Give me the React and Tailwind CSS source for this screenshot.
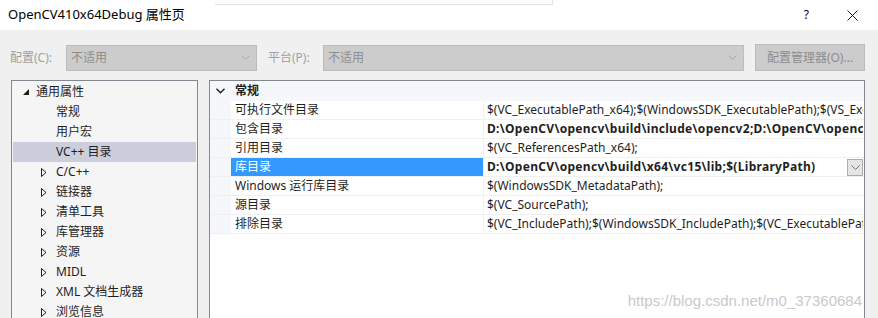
import React from 'react';

const FONT = { fontFamily: '"Noto Sans", "Noto Sans CJK SC", sans-serif' };

const TREE_ITEMS = [
  { label: '常规', depth: 1 },
  { label: '用户宏', depth: 1 },
  { label: 'VC++ 目录', depth: 1, selected: true },
  { label: 'C/C++', depth: 1, collapsed: true },
  { label: '链接器', depth: 1, collapsed: true },
  { label: '清单工具', depth: 1, collapsed: true },
  { label: '库管理器', depth: 1, collapsed: true },
  { label: '资源', depth: 1, collapsed: true },
  { label: 'MIDL', depth: 1, collapsed: true },
  { label: 'XML 文档生成器', depth: 1, collapsed: true },
  { label: '浏览信息', depth: 1, collapsed: true },
];

const PROPERTY_ROWS = [
  { name: '可执行文件目录', value: '$(VC_ExecutablePath_x64);$(WindowsSDK_ExecutablePath);$(VS_ExecutablePath);$(MSBuild_ExecutablePath)' },
  { name: '包含目录', value: 'D:\\OpenCV\\opencv\\build\\include\\opencv2;D:\\OpenCV\\opencv\\build\\include;$(IncludePath)', bold: true },
  { name: '引用目录', value: '$(VC_ReferencesPath_x64);' },
  { name: '库目录', value: 'D:\\OpenCV\\opencv\\build\\x64\\vc15\\lib;$(LibraryPath)', bold: true, selected: true },
  { name: 'Windows 运行库目录', value: '$(WindowsSDK_MetadataPath);' },
  { name: '源目录', value: '$(VC_SourcePath);' },
  { name: '排除目录', value: '$(VC_IncludePath);$(WindowsSDK_IncludePath);$(VC_ExecutablePath_x64);' },
];

const Chevron = ({ className = 'text-[#a6a6a6]' }) => (
  <svg width="9" height="5" viewBox="0 0 9 5" className={className}>
    <path d="M0.5 0.5 L4.5 4.5 L8.5 0.5" fill="none" stroke="currentColor" strokeWidth="1" />
  </svg>
);

const DisabledSelect = ({ width, text }) => (
  <div
    className={`flex h-[26px] items-center justify-between border border-[#bcbcbc] bg-[#cccccc] pl-[4px] pr-[6px] ${width}`}
  >
    <span className="text-[12px] text-[#8c8c8c]">{text}</span>
    <Chevron />
  </div>
);

const TreeRow = ({ item }) => (
  <div
    className={`flex h-[20px] items-center ${item.selected ? 'bg-[#cccedb]' : ''}`}
  >
    <div className="flex w-[43px] shrink-0 justify-end pr-[9px]">
      {item.collapsed && (
        <svg width="6" height="9" viewBox="0 0 6 9">
          <path d="M0.5 0.5 L5 4.5 L0.5 8.5 Z" fill="none" stroke="#1e1e1e" strokeWidth="1" />
        </svg>
      )}
    </div>
    <span className="text-[12px] text-[#1e1e1e]">{item.label}</span>
  </div>
);

const PropertyRow = ({ row }) => (
  <div className="flex h-[19px] border-b border-[#f0f0f0]">
    <div className="w-[21px] shrink-0 bg-[#f5f7fa]" />
    <div
      className={`flex w-[252px] shrink-0 items-center pl-[4px] text-[12px] ${
        row.selected ? 'bg-[#3399ff] text-white' : 'bg-white text-[#1e1e1e]'
      }`}
    >
      {row.name}
    </div>
    <div className="w-px shrink-0 bg-[#f0f0f0]" />
    <div className="flex min-w-0 flex-1 items-center bg-white pl-[3px] pr-[1px]">
      <span
        className={`flex-1 overflow-hidden whitespace-nowrap text-[12px] text-[#1e1e1e] ${
          row.bold ? 'font-bold tracking-[0.3px]' : ''
        }`}
      >
        {row.value}
      </span>
      {row.selected && (
        <div className="flex h-[17px] w-[16px] shrink-0 items-center justify-center border border-[#acacac] bg-[#e5e5e5]">
          <Chevron className="text-[#707070]" />
        </div>
      )}
    </div>
  </div>
);

const App = () => (
  <div className="relative h-[318px] w-[878px] overflow-hidden bg-[#f0f0f0]" style={FONT}>
    {/* title bar */}
    <div className="h-[30px] bg-white">
      <div className="flex h-[5px]">
        <div className="ml-[215px] w-[338px] border-b border-r border-[#e3e3e3] bg-[#fafafa]" />
      </div>
      <div className="flex h-[20px] items-center justify-between pl-[8px] pr-[20px]">
        <span className="text-[13px] text-black">OpenCV410x64Debug 属性页</span>
        <div className="flex items-center gap-[38px]">
          <span className="text-[12px] text-black">?</span>
          <svg width="11" height="11" viewBox="0 0 11 11">
            <path d="M0.5 0.5 L10.5 10.5 M10.5 0.5 L0.5 10.5" stroke="#1e1e1e" strokeWidth="1" />
          </svg>
        </div>
      </div>
    </div>

    {/* configuration row */}
    <div className="flex items-center pl-[10px] pt-[14px]">
      <span className="w-[56px] text-[12px] text-[#a0a0a0]">配置(C):</span>
      <DisabledSelect width="w-[191px]" text="不适用" />
      <span className="ml-[11px] w-[55px] text-[12px] text-[#a0a0a0]">平台(P):</span>
      <DisabledSelect width="w-[421px]" text="不适用" />
      <div className="ml-[11px] flex h-[27px] w-[110px] items-center justify-center border border-[#bcbcbc] bg-[#cccccc] text-[12px] text-[#8c8c8c]">
        配置管理器(O)...
      </div>
    </div>

    {/* panels */}
    <div className="mt-[9px] flex h-[300px] pl-[11px]">
      <div className="w-[187px] shrink-0 border border-[#828790] bg-[#f5f5f5] pt-px">
        <div className="flex h-[20px] items-center">
          <div className="flex w-[24px] shrink-0 justify-end pr-[7px]">
            <svg width="6" height="6" viewBox="0 0 6 6">
              <path d="M6 0 L6 6 L0 6 Z" fill="#1e1e1e" />
            </svg>
          </div>
          <span className="text-[12px] text-[#1e1e1e]">通用属性</span>
        </div>
        <div className="px-px">
          {TREE_ITEMS.map((item) => (
            <TreeRow key={item.label} item={item} />
          ))}
        </div>
      </div>

      <div className="ml-[11px] flex w-[656px] shrink-0 flex-col border border-[#828790] bg-white">
        <div className="flex h-[20px] shrink-0 items-center bg-[#f5f7fa]">
          <div className="flex w-[21px] shrink-0 justify-center">
            <svg width="9" height="6" viewBox="0 0 9 6">
              <path d="M0.5 0.8 L4.5 4.8 L8.5 0.8" fill="none" stroke="#1e1e1e" strokeWidth="1.4" />
            </svg>
          </div>
          <span className="pl-[4px] text-[12px] font-bold text-[#1e1e1e]">常规</span>
        </div>
        {PROPERTY_ROWS.map((row) => (
          <PropertyRow key={row.name} row={row} />
        ))}
      </div>
    </div>

    {/* watermark */}
    <span
      className="absolute bottom-[6px] right-[16px] text-[15px] text-[#c9c9c9]"
      style={{ fontFamily: '"Liberation Sans", sans-serif' }}
    >
      https://blog.csdn.net/m0_37360684
    </span>
  </div>
);

export default App;
